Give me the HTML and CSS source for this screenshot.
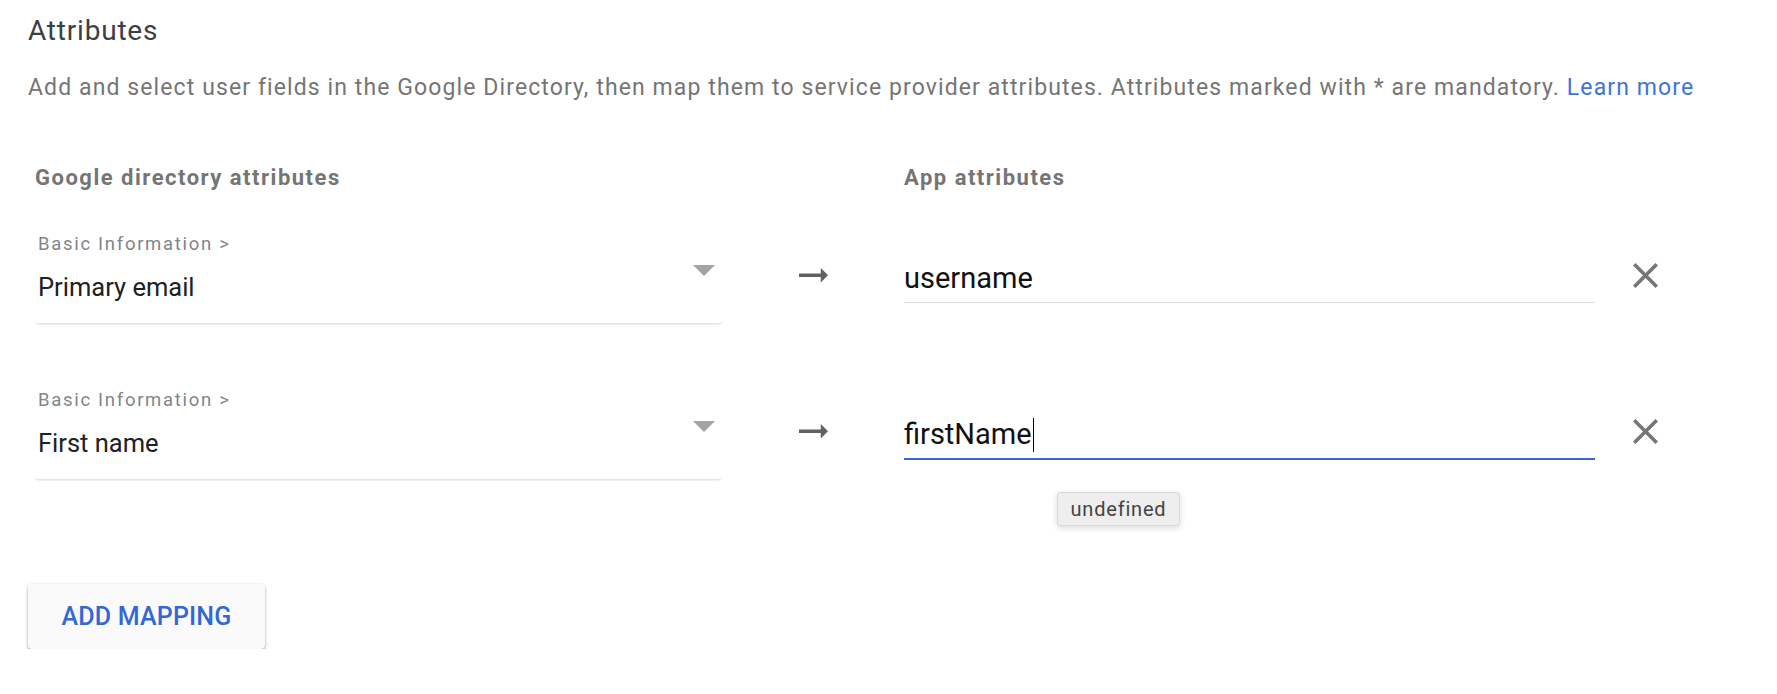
FILE: index.html
```html
<!DOCTYPE html>
<html lang="en">
<head>
<meta charset="utf-8">
<title>Attributes</title>
<link rel="stylesheet" href="styles.css">
</head>
<body>
<main class="page">
  <h2 class="title">Attributes</h2>
  <p class="desc">Add and select user fields in the Google Directory, then map them to service provider attributes. Attributes marked with * are mandatory. <a class="link" href="#">Learn more</a></p>

  <section class="mapping">
    <div class="mapping-head">
      <div class="head-cell">Google directory attributes</div>
      <div></div>
      <div class="head-cell">App attributes</div>
      <div></div>
    </div>

    <div class="mapping-row">
      <div class="select">
        <div class="select-text">
          <div class="select-label">Basic Information &gt;</div>
          <div class="select-value">Primary email</div>
        </div>
        <span class="select-caret"></span>
      </div>
      <div class="arrow-cell">
        <svg class="arrow" viewBox="4 8 16 8" width="29" height="14.5" aria-hidden="true"><path d="M16.01 11H4v2h12.01v3L20 12l-3.99-4z"/></svg>
      </div>
      <div class="field">username</div>
      <div class="remove-cell">
        <svg class="remove" viewBox="5 5 14 14" width="25" height="25" aria-hidden="true"><path d="M19 6.41L17.59 5 12 10.59 6.41 5 5 6.41 10.59 12 5 17.59 6.41 19 12 13.41 17.59 19 19 17.59 13.41 12z"/></svg>
      </div>
    </div>

    <div class="mapping-row">
      <div class="select">
        <div class="select-text">
          <div class="select-label">Basic Information &gt;</div>
          <div class="select-value">First name</div>
        </div>
        <span class="select-caret"></span>
      </div>
      <div class="arrow-cell">
        <svg class="arrow" viewBox="4 8 16 8" width="29" height="14.5" aria-hidden="true"><path d="M16.01 11H4v2h12.01v3L20 12l-3.99-4z"/></svg>
      </div>
      <div class="field field-focused">firstName<span class="text-cursor"></span>
        <div class="tooltip">undefined</div>
      </div>
      <div class="remove-cell">
        <svg class="remove" viewBox="5 5 14 14" width="25" height="25" aria-hidden="true"><path d="M19 6.41L17.59 5 12 10.59 6.41 5 5 6.41 10.59 12 5 17.59 6.41 19 12 13.41 17.59 19 19 17.59 13.41 12z"/></svg>
      </div>
    </div>
  </section>

  <button class="add-btn" type="button">ADD MAPPING</button>
</main>
</body>
</html>
```

FILE: styles.css
```css
* {
  box-sizing: border-box;
}

html, body {
  margin: 0;
  background: #ffffff;
}

body {
  font-family: Roboto, "Noto Sans", "Liberation Sans", sans-serif;
  color: #202124;
}

.page {
  padding: 15px 0 0 28px;
}

.title {
  margin: 0;
  font-size: 28px;
  line-height: 32px;
  font-weight: 400;
  letter-spacing: 0.8px;
  color: #3c4043;
}

.desc {
  margin: 27px 0 0;
  font-size: 23px;
  line-height: 28px;
  letter-spacing: 1.1px;
  color: #757575;
  white-space: nowrap;
}

.link {
  color: #3c74d9;
  text-decoration: none;
}

/* mapping table: source select, arrow, target field, remove */
.mapping {
  margin: 64px 0 0 7px;
}

.mapping-head,
.mapping-row {
  display: grid;
  grid-template-columns: 687px 182px 691px 101px;
  align-items: start;
}

.head-cell {
  font-size: 22px;
  line-height: 24px;
  font-weight: 700;
  letter-spacing: 1.5px;
  color: #757575;
}

.mapping-head {
  margin-bottom: 43px;
}

.mapping-row + .mapping-row {
  margin-top: 65px;
}

.select {
  display: flex;
  align-items: flex-start;
  padding: 0 0 20px 3px;
  border-bottom: 1px solid #e2e2e2;
  border-radius: 0 0 4px 4px;
  box-shadow: 0 1px 1px rgba(0, 0, 0, 0.06);
}

.select-text {
  flex: 1;
}

.select-label {
  font-size: 18.5px;
  line-height: 22px;
  letter-spacing: 1.7px;
  color: #80868b;
}

.select-value {
  margin-top: 16px;
  font-size: 25.5px;
  line-height: 32px;
  color: #202124;
}

.select-caret {
  width: 0;
  height: 0;
  margin: 32px 7px 0 0;
  border-left: 11px solid transparent;
  border-right: 11px solid transparent;
  border-top: 11px solid #a3a3a3;
}

.arrow-cell,
.remove-cell {
  display: flex;
  justify-content: center;
}

.arrow {
  margin-top: 35px;
  fill: #616161;
}

.remove {
  margin-top: 30px;
  fill: #757575;
}

.field {
  position: relative;
  margin-top: 28px;
  padding-bottom: 7px;
  font-size: 29px;
  line-height: 34px;
  color: #111111;
  border-bottom: 1px solid #dedede;
}

.field-focused {
  padding-bottom: 6px;
  border-bottom: 2px solid #3367d6;
}

.text-cursor {
  display: inline-block;
  width: 1.5px;
  height: 34px;
  margin-left: 1px;
  background: #000000;
  vertical-align: -8px;
}

.tooltip {
  position: absolute;
  left: 153px;
  top: calc(100% + 34px);
  width: 123px;
  height: 34px;
  display: flex;
  align-items: center;
  justify-content: center;
  font-size: 20px;
  letter-spacing: 0.8px;
  color: #444444;
  background: #eeeeee;
  border: 1px solid #d9d9d9;
  border-radius: 3px;
  box-shadow: 0 2px 6px rgba(0, 0, 0, 0.15);
}

.add-btn {
  display: block;
  margin-top: 104px;
  width: 237px;
  height: 65px;
  padding: 0;
  border: 0;
  border-radius: 4px;
  background: #fafafa;
  box-shadow: 0 2px 3px rgba(0, 0, 0, 0.32), 0 0 3px rgba(0, 0, 0, 0.1);
  font-family: Roboto, "Noto Sans", "Liberation Sans", sans-serif;
  font-size: 25px;
  font-weight: 500;
  color: #3367d6;
  letter-spacing: 0.2px;
}
```
